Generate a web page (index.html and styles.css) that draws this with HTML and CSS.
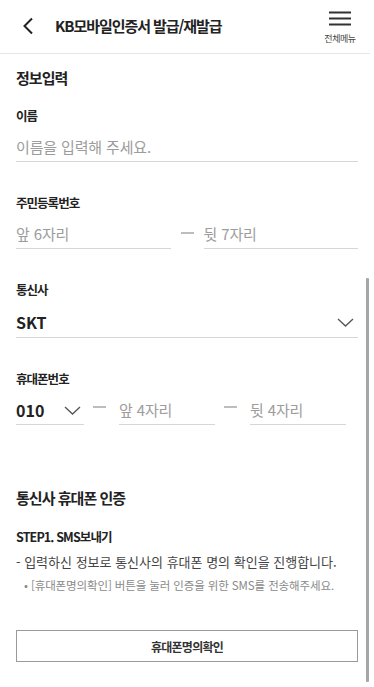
FILE: index.html
```html
<!DOCTYPE html>
<html lang="ko">
<head>
    <meta charset="UTF-8">
    <meta name="viewport" content="width=device-width, initial-scale=1.0">
    <title>KB모바일인증서 발급/재발급</title>
    <link rel="stylesheet" href="styles.css">
</head>
<body>
    <div class="app">
        <!-- Header -->
        <header class="header">
            <button class="back-btn" aria-label="뒤로">
                <svg width="12" height="18" viewBox="0 0 12 18"><path d="M10 1.5 L2.5 9 L10 16.5" fill="none" stroke="#222" stroke-width="2"/></svg>
            </button>
            <h1 class="title">KB모바일인증서 발급/재발급</h1>
            <button class="menu-btn">
                <svg width="22" height="16" viewBox="0 0 22 16"><path d="M0 1.5 H22 M0 7.5 H22 M0 13.5 H22" stroke="#333" stroke-width="2"/></svg>
                <span class="menu-label">전체메뉴</span>
            </button>
        </header>

        <main class="content">
            <h2 class="section-title">정보입력</h2>

            <div class="field">
                <label class="field-label">이름</label>
                <div class="input-line"><span class="placeholder">이름을 입력해 주세요.</span></div>
            </div>

            <div class="field">
                <label class="field-label">주민등록번호</label>
                <div class="input-row">
                    <div class="input-line grow"><span class="placeholder">앞 6자리</span></div>
                    <span class="dash"></span>
                    <div class="input-line grow"><span class="placeholder">뒷 7자리</span></div>
                </div>
            </div>

            <div class="field">
                <label class="field-label">통신사</label>
                <div class="input-line select-line">
                    <span class="value">SKT</span>
                    <svg class="chevron" width="17" height="9" viewBox="0 0 17 9"><path d="M1 1 L8.5 8 L16 1" fill="none" stroke="#555" stroke-width="1.3"/></svg>
                </div>
            </div>

            <div class="field">
                <label class="field-label">휴대폰번호</label>
                <div class="input-row phone-row">
                    <div class="input-line select-line prefix">
                        <span class="value">010</span>
                        <svg class="chevron" width="17" height="9" viewBox="0 0 17 9"><path d="M1 1 L8.5 8 L16 1" fill="none" stroke="#555" stroke-width="1.3"/></svg>
                    </div>
                    <span class="dash"></span>
                    <div class="input-line phone-part"><span class="placeholder">앞 4자리</span></div>
                    <span class="dash"></span>
                    <div class="input-line phone-part"><span class="placeholder">뒷 4자리</span></div>
                </div>
            </div>

            <h2 class="section-title auth-title">통신사 휴대폰 인증</h2>
            <p class="step">STEP1. SMS보내기</p>
            <p class="desc">- 입력하신 정보로 통신사의 휴대폰 명의 확인을 진행합니다.</p>
            <p class="note">• [휴대폰명의확인] 버튼을 눌러 인증을 위한 SMS를 전송해주세요.</p>

            <button class="confirm-btn">휴대폰명의확인</button>
        </main>

        <div class="scrollbar"></div>
    </div>
</body>
</html>
```

FILE: styles.css
```css
* {
    margin: 0;
    padding: 0;
    box-sizing: border-box;
    font-family: 'Noto Sans CJK KR', 'Noto Sans', sans-serif;
}

body {
    background-color: #fff;
    color: #222;
    letter-spacing: -0.06em;
}

.app {
    position: relative;
    width: 374px;
    min-height: 687px;
}

button {
    background: none;
    border: none;
    cursor: pointer;
    color: inherit;
}

/* Header */
.header {
    height: 54px;
    display: flex;
    align-items: center;
    border-bottom: 1px solid #e6e6e6;
    margin-right: 4px;
}

.back-btn {
    width: 55px;
    height: 53px;
    display: flex;
    align-items: center;
    padding-left: 22px;
    padding-bottom: 2px;
}

.title {
    flex: 1;
    font-size: 15px;
    font-weight: 700;
    letter-spacing: -0.07em;
    padding-bottom: 2px;
}

.menu-btn {
    width: 44px;
    height: 53px;
    display: flex;
    flex-direction: column;
    align-items: center;
    padding-top: 11px;
    margin-right: 8px;
}

.menu-label {
    font-size: 9px;
    color: #444;
    margin-top: 6px;
    line-height: 11px;
    letter-spacing: -0.05em;
}

/* Content */
.content {
    padding: 0 16px 40px;
}

.section-title {
    font-size: 15px;
    font-weight: 700;
    line-height: 22px;
    margin-top: 13px;
}

.field {
    margin-top: 32px;
}

.section-title + .field {
    margin-top: 18px;
}

.field-label {
    display: block;
    font-size: 12.5px;
    font-weight: 700;
    line-height: 18px;
}

.input-line {
    display: flex;
    align-items: center;
    padding-top: 8px;
    height: 37px;
    border-bottom: 1px solid #d6d6d6;
    font-size: 15px;
    line-height: 28px;
    letter-spacing: -0.01em;
}

.placeholder {
    color: #9c9c9c;
}

.value {
    font-size: 16px;
    font-weight: 700;
    color: #222;
    letter-spacing: 0;
}

.select-line {
    justify-content: space-between;
    height: 39px;
    padding-right: 4px;
}

.input-row {
    display: flex;
    align-items: flex-start;
}

.grow {
    flex: 1;
}

.dash {
    width: 13px;
    height: 1.5px;
    background-color: #bdbdbd;
    margin: 20px 10px 0;
}

.phone-row .input-line {
    height: 37px;
}

.prefix {
    width: 68px;
    padding-right: 3px;
}

.phone-row .dash {
    margin: 18px 13px 0 9px;
}

.phone-part {
    width: 96px;
}

.auth-title {
    margin-top: 62px;
}

.step {
    font-size: 12.5px;
    font-weight: 700;
    line-height: 18px;
    margin-top: 19px;
    letter-spacing: -0.07em;
}

.desc {
    font-size: 13px;
    line-height: 20px;
    color: #444;
    margin-top: 6px;
    letter-spacing: 0;
}

.note {
    font-size: 11.5px;
    line-height: 16px;
    color: #8a8a8a;
    margin-top: 5px;
    padding-left: 8px;
    letter-spacing: -0.01em;
}

.confirm-btn {
    display: block;
    width: 100%;
    height: 32px;
    margin-top: 37px;
    border: 1px solid #9a9a9a;
    font-size: 12px;
    font-weight: 700;
    color: #333;
    letter-spacing: -0.06em;
}

/* Overlay scrollbar */
.scrollbar {
    position: absolute;
    left: 366px;
    top: 278px;
    width: 3px;
    height: 404px;
    background-color: #a6a6a6;
    border-radius: 1px;
}
```
